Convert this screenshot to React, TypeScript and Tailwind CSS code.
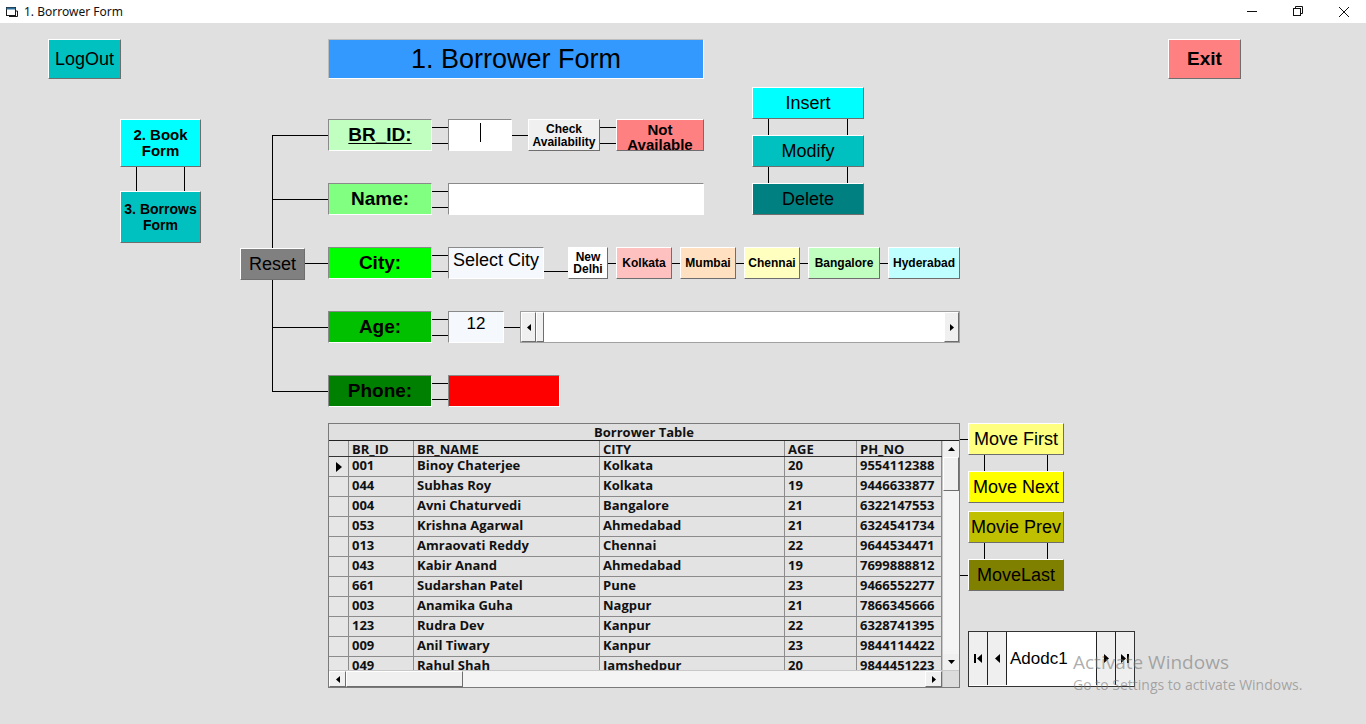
import React from "react";

const raised =
  "border border-t-white border-l-white border-r-[#6e6e6e] border-b-[#6e6e6e]";
const sunken =
  "border border-t-[#8a8a8a] border-l-[#8a8a8a] border-r-white border-b-white";

const rows: [string, string, string, string, string][] = [
  ["001", "Binoy Chaterjee", "Kolkata", "20", "9554112388"],
  ["044", "Subhas Roy", "Kolkata", "19", "9446633877"],
  ["004", "Avni Chaturvedi", "Bangalore", "21", "6322147553"],
  ["053", "Krishna Agarwal", "Ahmedabad", "21", "6324541734"],
  ["013", "Amraovati Reddy", "Chennai", "22", "9644534471"],
  ["043", "Kabir Anand", "Ahmedabad", "19", "7699888812"],
  ["661", "Sudarshan Patel", "Pune", "23", "9466552277"],
  ["003", "Anamika Guha", "Nagpur", "21", "7866345666"],
  ["123", "Rudra Dev", "Kanpur", "22", "6328741395"],
  ["009", "Anil Tiwary", "Kanpur", "23", "9844114422"],
  ["049", "Rahul Shah", "Jamshedpur", "20", "9844451223"],
];

function RowConn() {
  return (
    <div className="w-[88px] h-[32px] pt-[16px] pl-[32px] shrink-0">
      <div className="h-px bg-black" />
    </div>
  );
}

function Double() {
  return (
    <div className="w-[16px] h-[32px] flex flex-col pt-[8px] gap-[15px] shrink-0">
      <div className="h-px bg-black" />
      <div className="h-px bg-black" />
    </div>
  );
}

function Single({ w }: { w: "w-[16px]" | "w-[8px]" | "w-[24px]" }) {
  return (
    <div className={`${w} h-[32px] pt-[16px] shrink-0`}>
      <div className="h-px bg-black" />
    </div>
  );
}

function VPair({ w }: { w: "w-[81px]" | "w-[112px]" | "w-[96px]" }) {
  return (
    <div className={`${w} h-full flex justify-between px-[16px]`}>
      <div className="w-px h-full bg-black" />
      <div className="w-px h-full bg-black" />
    </div>
  );
}

function Label({ text, bg, underline }: { text: string; bg: string; underline?: boolean }) {
  return (
    <div
      className={`w-[104px] h-[32px] shrink-0 ${sunken} ${bg} flex items-center justify-center text-[19px] font-bold text-black`}
    >
      <span className={underline ? "underline underline-offset-2" : ""}>{text}</span>
    </div>
  );
}

function TriLeft() {
  return (
    <svg width="4" height="7" viewBox="0 0 4 7">
      <path d="M4 0 L0 3.5 L4 7 Z" fill="#000" />
    </svg>
  );
}
function TriRight() {
  return (
    <svg width="4" height="7" viewBox="0 0 4 7">
      <path d="M0 0 L4 3.5 L0 7 Z" fill="#000" />
    </svg>
  );
}

function CityBtn({ children, bg, w }: { children: React.ReactNode; bg: string; w: string }) {
  return (
    <div
      className={`${w} h-[32px] shrink-0 ${raised} ${bg} flex items-center justify-center text-[12px] font-bold leading-[12px] text-center`}
    >
      <div>{children}</div>
    </div>
  );
}

export default function App() {
  const cell = "border-r border-[#8c8c8c] pl-[3px] whitespace-nowrap overflow-hidden";
  const hcell = "border-r border-[#8c8c8c] pl-[3px] whitespace-nowrap";
  return (
    <div className="w-[1366px] h-[724px] bg-[#e0e0e0] flex flex-col overflow-hidden relative font-['Liberation_Sans',Arial,sans-serif] text-black">
      {/* title bar */}
      <div className="h-[23px] bg-white flex items-center shrink-0 font-['Noto_Sans',sans-serif] text-[12px]">
        <div className="w-[24px] flex justify-center">
          <svg width="12" height="11" viewBox="0 0 12 11">
            <rect x="0.5" y="1.5" width="9" height="8" fill="#fff" stroke="#1a1a1a" />
            <rect x="0.5" y="1.5" width="9" height="2" fill="#2a6f9a" />
            <path d="M9.5 5 L11.5 5 L11.5 10.5 L3 10.5" fill="none" stroke="#1a1a1a" />
          </svg>
        </div>
        <span className="text-[#111]">1. Borrower Form</span>
        <div className="ml-auto flex h-full">
          <div className="w-[46px] h-full flex items-center justify-center">
            <svg width="11" height="11" viewBox="0 0 11 11">
              <path d="M0 5.5 H10" stroke="#111" strokeWidth="1" />
            </svg>
          </div>
          <div className="w-[46px] h-full flex items-center justify-center">
            <svg width="11" height="11" viewBox="0 0 11 11">
              <rect x="0.5" y="2.5" width="7" height="7" fill="none" stroke="#111" />
              <path d="M2.5 2.5 V0.5 H9.5 V7.5 H7.5" fill="none" stroke="#111" />
            </svg>
          </div>
          <div className="w-[45px] h-full flex items-center justify-center">
            <svg width="12" height="12" viewBox="0 0 12 12">
              <path d="M1 1 L11 11 M11 1 L1 11" stroke="#111" strokeWidth="1" />
            </svg>
          </div>
        </div>
      </div>

      <div className="flex flex-1">
        {/* left column */}
        <div className="w-[240px] flex flex-col shrink-0">
          <div className={`ml-[48px] mt-[16px] w-[73px] h-[40px] ${raised} bg-[#00c0c0] flex items-center justify-center text-[18px]`}>
            LogOut
          </div>
          <div className={`ml-[120px] mt-[40px] w-[81px] h-[48px] ${raised} bg-[#00ffff] flex items-center justify-center text-center text-[15px] font-bold leading-[16px]`}>
            <div>
              2. Book
              <br />
              Form
            </div>
          </div>
          <div className="ml-[120px] h-[24px]">
            <VPair w="w-[81px]" />
          </div>
          <div className={`ml-[120px] w-[81px] h-[52px] ${raised} bg-[#00c0c0] flex items-center justify-center text-center text-[14px] font-bold leading-[16px]`}>
            <div>
              3. Borrows
              <br />
              Form
            </div>
          </div>
        </div>

        {/* right area */}
        <div className="flex flex-col flex-1">
          <div className="mt-[16px] flex">
            <div className="ml-[88px] w-[376px] h-[40px] border border-t-[#bdbdbd] border-l-[#bdbdbd] border-r-white border-b-white bg-[#3399ff] flex items-center justify-center text-[27px]">
              1. Borrower Form
            </div>
            <div className={`ml-[464px] w-[73px] h-[40px] ${raised} bg-[#ff8080] flex items-center justify-center text-[19px] font-bold`}>
              Exit
            </div>
          </div>

          {/* form */}
          <div className="relative mt-[8px] flex flex-col">
            <div className="absolute left-[32px] top-[48px] w-px h-[256px] bg-black" />
            <div className="flex">
              <div className="flex flex-col pt-[32px] gap-[32px]">
                {/* BR_ID row */}
                <div className="flex h-[32px]">
                  <RowConn />
                  <Label text="BR_ID:" bg="bg-[#c0ffc0]" underline />
                  <Double />
                  <div className={`w-[64px] h-[32px] ${sunken} bg-white pl-[31px] pt-[3px]`}>
                    <div className="w-px h-[19px] bg-black" />
                  </div>
                  <Single w="w-[16px]" />
                  <div className={`w-[72px] h-[32px] ${raised} bg-[#f0f0f0] flex items-center justify-center text-center text-[12px] font-bold leading-[13px] pt-[1px]`}>
                    <div>
                      Check
                      <br />
                      Availability
                    </div>
                  </div>
                  <Double />
                  <div className={`w-[88px] h-[32px] ${raised} bg-[#ff8080] overflow-hidden text-center text-[15px] font-bold leading-[15px] pt-[2px]`}>
                    Not
                    <br />
                    Available
                  </div>
                </div>
                {/* Name row */}
                <div className="flex h-[32px]">
                  <RowConn />
                  <Label text="Name:" bg="bg-[#80ff80]" />
                  <Double />
                  <div className={`w-[256px] h-[32px] ${sunken} bg-white`} />
                </div>
              </div>
              <div className="ml-[48px] flex flex-col">
                <div className={`w-[112px] h-[32px] ${raised} bg-[#00ffff] flex items-center justify-center text-[18px]`}>
                  Insert
                </div>
                <div className="h-[16px]">
                  <VPair w="w-[112px]" />
                </div>
                <div className={`w-[112px] h-[32px] ${raised} bg-[#00c0c0] flex items-center justify-center text-[18px]`}>
                  Modify
                </div>
                <div className="h-[16px]">
                  <VPair w="w-[112px]" />
                </div>
                <div className={`w-[112px] h-[32px] ${raised} bg-[#008080] flex items-center justify-center text-[18px]`}>
                  Delete
                </div>
              </div>
            </div>

            {/* City row */}
            <div className="flex h-[32px] mt-[32px]">
              <div className="w-[88px] h-[32px] flex shrink-0">
                <div className={`relative z-10 mt-[1px] w-[65px] h-[32px] ${raised} bg-[#808080] flex items-center justify-center text-[18px]`}>
                  Reset
                </div>
                <div className="flex-1 pt-[16px]">
                  <div className="h-px bg-black" />
                </div>
              </div>
              <Label text="City:" bg="bg-[#00ff00]" />
              <Double />
              <div className={`w-[96px] h-[32px] ${sunken} bg-[#f5f9fd] text-[18px] leading-[24px] pl-[4px]`}>
                Select City
              </div>
              <div className="w-[24px] h-[32px] pt-[24px] shrink-0">
                <div className="h-px bg-black" />
              </div>
              <CityBtn bg="bg-white" w="w-[40px]">
                New
                <br />
                Delhi
              </CityBtn>
              <Single w="w-[8px]" />
              <CityBtn bg="bg-[#ffc0c0]" w="w-[56px]">Kolkata</CityBtn>
              <Single w="w-[8px]" />
              <CityBtn bg="bg-[#ffe0c0]" w="w-[56px]">Mumbai</CityBtn>
              <Single w="w-[8px]" />
              <CityBtn bg="bg-[#ffffc0]" w="w-[56px]">Chennai</CityBtn>
              <Single w="w-[8px]" />
              <CityBtn bg="bg-[#c0ffc0]" w="w-[72px]">Bangalore</CityBtn>
              <Single w="w-[8px]" />
              <CityBtn bg="bg-[#c0ffff]" w="w-[72px]">Hyderabad</CityBtn>
            </div>

            {/* Age row */}
            <div className="flex h-[32px] mt-[32px]">
              <RowConn />
              <Label text="Age:" bg="bg-[#00c000]" />
              <Double />
              <div className={`w-[56px] h-[32px] ${sunken} bg-[#f5f9fd] text-[17px] leading-[24px] text-center`}>
                12
              </div>
              <Single w="w-[16px]" />
              <div className="w-[440px] h-[32px] flex border border-[#a0a0a0] bg-white">
                <div className={`w-[15px] h-full ${raised} bg-[#f0f0f0] flex items-center justify-center`}>
                  <TriLeft />
                </div>
                <div className={`w-[8px] h-full ${raised} bg-[#f0f0f0]`} />
                <div className="flex-1" />
                <div className={`w-[15px] h-full ${raised} bg-[#f0f0f0] flex items-center justify-center`}>
                  <TriRight />
                </div>
              </div>
            </div>

            {/* Phone row */}
            <div className="flex h-[32px] mt-[32px]">
              <RowConn />
              <Label text="Phone:" bg="bg-[#008000]" />
              <Double />
              <div className="w-[112px] h-[32px] border border-t-[#8a8a8a] border-l-[#8a8a8a] border-r-white border-b-white bg-[#ff0000]" />
            </div>
          </div>

          {/* table + nav */}
          <div className="mt-[16px] flex items-start">
            <div className="ml-[88px] w-[632px] h-[265px] border border-[#7a7a7a] bg-[#e0e0e0] flex flex-col font-['Open_Sans',sans-serif] font-bold text-[13px] text-[#111]">
              <div className="h-[17px] border-b border-[#222] text-center leading-[16px] font-bold">
                Borrower Table
              </div>
              <div className="flex h-[229px]">
                <div className="w-[613px] flex flex-col overflow-hidden">
                  <div className="h-[16px] shrink-0 flex border-b border-[#333] leading-[17px] font-bold">
                    <div className="w-[20px] border-r border-[#8c8c8c]" />
                    <div className={`w-[65px] ${hcell}`}>BR_ID</div>
                    <div className={`w-[186px] ${hcell}`}>BR_NAME</div>
                    <div className={`w-[185px] ${hcell}`}>CITY</div>
                    <div className={`w-[72px] ${hcell}`}>AGE</div>
                    <div className={`w-[85px] ${hcell}`}>PH_NO</div>
                  </div>
                  {rows.map((r, i) => (
                    <div key={r[0]} className="h-[20px] shrink-0 flex border-b border-[#8c8c8c] leading-[17px] bg-[#e3e3e3]">
                      <div className="w-[20px] border-r border-[#8c8c8c] bg-[#e6e6e6] flex items-center justify-center">
                        {i === 0 ? (
                          <svg width="6" height="10" viewBox="0 0 6 10">
                            <path d="M0 0 L6 5 L0 10 Z" fill="#000" />
                          </svg>
                        ) : null}
                      </div>
                      <div className={`w-[65px] ${cell}`}>{r[0]}</div>
                      <div className={`w-[186px] ${cell}`}>{r[1]}</div>
                      <div className={`w-[185px] ${cell}`}>{r[2]}</div>
                      <div className={`w-[72px] ${cell}`}>{r[3]}</div>
                      <div className={`w-[85px] ${cell}`}>{r[4]}</div>
                    </div>
                  ))}
                </div>
                <div className="w-[17px] flex flex-col bg-[#f2f2f2] border-l border-[#c8c8c8]">
                  <div className="h-[16px] bg-[#f0f0f0] flex items-center justify-center">
                    <svg width="7" height="4" viewBox="0 0 7 4">
                      <path d="M0 4 L3.5 0 L7 4 Z" fill="#000" />
                    </svg>
                  </div>
                  <div className={`h-[34px] ${raised} bg-[#f0f0f0]`} />
                  <div className="flex-1 bg-[#f4f4f4]" />
                  <div className="h-[16px] bg-[#f0f0f0] flex items-center justify-center">
                    <svg width="7" height="4" viewBox="0 0 7 4">
                      <path d="M0 0 L3.5 4 L7 0 Z" fill="#000" />
                    </svg>
                  </div>
                </div>
              </div>
              <div className="h-[17px] flex border-t border-[#c8c8c8]">
                <div className={`w-[17px] h-full ${raised} bg-[#f0f0f0] flex items-center justify-center`}>
                  <TriLeft />
                </div>
                <div className={`w-[117px] h-full ${raised} bg-[#f0f0f0]`} />
                <div className="flex-1 bg-[#f4f4f4]" />
                <div className={`w-[17px] h-full ${raised} bg-[#f0f0f0] flex items-center justify-center`}>
                  <TriRight />
                </div>
                <div className="w-[17px] h-full bg-[#dcdcdc] border-l border-[#bdbdbd]" />
              </div>
            </div>

            <div className="flex flex-col">
              <div className="flex">
                <Single w="w-[8px]" />
                <div className={`w-[96px] h-[32px] ${raised} bg-[#ffff80] flex items-center justify-center text-[18px]`}>
                  Move First
                </div>
              </div>
              <div className="h-[16px] ml-[8px]">
                <VPair w="w-[96px]" />
              </div>
              <div className="flex ml-[8px]">
                <div className={`w-[96px] h-[32px] ${raised} bg-[#ffff00] flex items-center justify-center text-[18px]`}>
                  Move Next
                </div>
              </div>
              <div className="flex ml-[8px] mt-[8px]">
                <div className={`w-[96px] h-[32px] ${raised} bg-[#c0c000] flex items-center justify-center text-[18px]`}>
                  Movie Prev
                </div>
              </div>
              <div className="h-[16px] ml-[8px]">
                <VPair w="w-[96px]" />
              </div>
              <div className="flex">
                <Single w="w-[8px]" />
                <div className={`w-[96px] h-[32px] ${raised} bg-[#808000] flex items-center justify-center text-[18px]`}>
                  MoveLast
                </div>
              </div>

              {/* Adodc */}
              <div className="ml-[8px] mt-[40px] w-[167px] h-[56px] border border-[#333] bg-white flex items-start">
                <div className="w-[19px] h-[53px] border-r border-[#222] bg-[#efefef] flex items-center justify-center gap-px">
                  <div className="w-[2px] h-[9px] bg-black" />
                  <svg width="5" height="9" viewBox="0 0 5 9">
                    <path d="M5 0 L0 4.5 L5 9 Z" fill="#000" />
                  </svg>
                </div>
                <div className="w-[19px] h-[53px] border-r border-[#222] bg-[#efefef] flex items-center justify-center">
                  <svg width="5" height="9" viewBox="0 0 5 9">
                    <path d="M5 0 L0 4.5 L5 9 Z" fill="#000" />
                  </svg>
                </div>
                <div className="flex-1 h-[53px] flex items-center pl-[3px] text-[17px]">Adodc1</div>
                <div className="w-[19px] h-[53px] border-l border-[#222] bg-[#efefef] flex items-center justify-center">
                  <svg width="5" height="9" viewBox="0 0 5 9">
                    <path d="M0 0 L5 4.5 L0 9 Z" fill="#000" />
                  </svg>
                </div>
                <div className="w-[19px] h-[53px] border-l border-[#222] bg-[#efefef] flex items-center justify-center gap-px">
                  <svg width="5" height="9" viewBox="0 0 5 9">
                    <path d="M0 0 L5 4.5 L0 9 Z" fill="#000" />
                  </svg>
                  <div className="w-[2px] h-[9px] bg-black" />
                </div>
              </div>
            </div>
          </div>
        </div>
      </div>

      {/* Windows activation watermark overlay */}
      <div className="absolute left-[1073px] top-[653px] font-['Open_Sans',sans-serif] text-[rgba(120,120,120,0.6)] leading-none pointer-events-none">
        <div className="text-[19px]">Activate Windows</div>
        <div className="text-[14px] mt-[6px]">Go to Settings to activate Windows.</div>
      </div>
    </div>
  );
}
